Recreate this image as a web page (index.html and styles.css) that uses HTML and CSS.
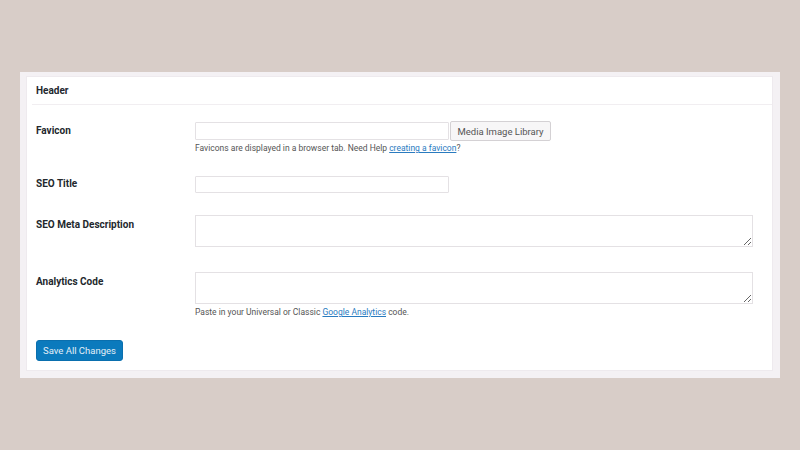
FILE: index.html
```html
<!DOCTYPE html>
<html>
<head>
    <meta charset="UTF-8">
    <title>Header Settings</title>
    <link rel="stylesheet" href="styles.css">
</head>
<body>
    <div class="panel">
        <div class="card">
            <h2 class="card-head">Header</h2>
            <form class="form">
                <div class="row row-first">
                    <label class="label">Favicon</label>
                    <div class="field">
                        <div class="inline">
                            <input type="text" class="text">
                            <button type="button" class="btn">Media Image Library</button>
                        </div>
                        <p class="help">Favicons are displayed in a browser tab. Need Help <a href="#">creating a favicon</a>?</p>
                    </div>
                </div>
                <div class="row">
                    <label class="label">SEO Title</label>
                    <div class="field"><input type="text" class="text short"></div>
                </div>
                <div class="row row-wide">
                    <label class="label">SEO Meta Description</label>
                    <div class="field"><textarea class="area"></textarea></div>
                </div>
                <div class="row">
                    <label class="label">Analytics Code</label>
                    <div class="field">
                        <textarea class="area"></textarea>
                        <p class="help help-low">Paste in your Universal or Classic <a href="#">Google Analytics</a> code.</p>
                    </div>
                </div>
                <button type="button" class="save">Save All Changes</button>
            </form>
        </div>
    </div>
</body>
</html>
```

FILE: styles.css
```css
body{margin: 0;padding: 72px 20px 0 20px;background: #d8cdc8;font-family: "Roboto", "Liberation Sans", sans-serif;color: #23282d;}
.panel{width: 747px;height: 295px;padding: 4px 7px 7px 6px;background: #f4f1f4;}
.card{height: 293px;background: #fff;border: 1px solid #eeeaee;}
.card-head{margin: 0 0 0 5px;height: 27px;line-height: 28px;padding-left: 4px;font-size: 10px;font-weight: bold;border-bottom: 1px solid #f1eef1;}
.form{padding: 16px 0 0 9px;}
.row{display: grid;grid-template-columns: 159px 1fr;align-items: start;margin-bottom: 22px;}
.row-first{margin-bottom: 20px;}
.row-wide{margin-bottom: 25px;}
.label{font-size: 10px;font-weight: bold;line-height: 18px;padding-top: 1px;}
.field{width: 558px;}
.inline{display: flex;align-items: center;}
.text{box-sizing: border-box;width: 254px;height: 18px;margin: 0;border: 1px solid #e4e1e4;border-radius: 1px;background: #fff;}
.short{height: 17px;}
.btn{box-sizing: border-box;height: 20px;width: 101px;margin: 0 0 0 1px;padding: 0;border: 1px solid #d4d1d4;border-radius: 2px;background: #f7f6f7;color: #555;font-family: inherit;font-size: 9.5px;}
.help{margin: 1px 0 0 0;font-size: 8.5px;line-height: 12px;color: #555;}
.help-low{margin-top: 2px;}
.help a{color: #2a7bbf;}
.area{box-sizing: border-box;display: block;width: 558px;height: 32px;margin: 0;border: 1px solid #e4e1e4;resize: vertical;}
.save{display: block;margin-top: 1px;box-sizing: border-box;width: 87px;height: 21px;padding: 0;border: 1px solid #0a6fae;border-radius: 3px;background: #0b7abd;color: #e4eef7;font-family: inherit;font-size: 9.5px;}
```
